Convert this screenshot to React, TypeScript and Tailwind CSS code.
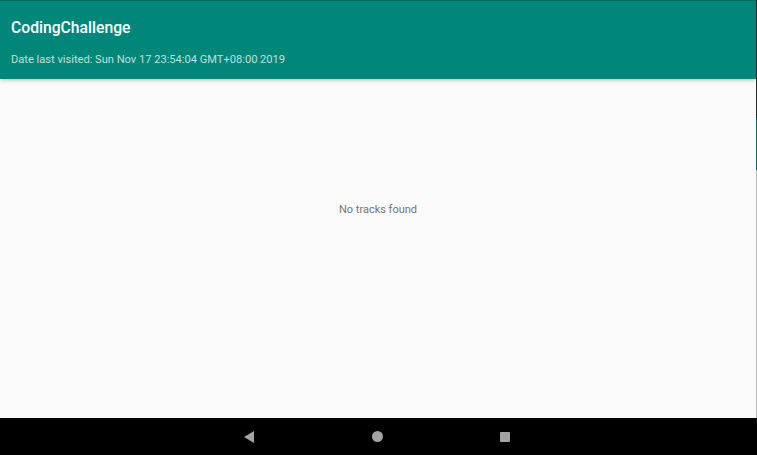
export default function App() {
  return (
    <div className="flex h-[455px] w-[757px] overflow-hidden bg-black font-['Roboto',sans-serif]">
      <div className="flex w-[756px] flex-col">
        {/* App bar */}
        <header className="relative z-10 flex h-[79px] flex-col border-t border-[#00695c] bg-[#00877a] px-[11px] shadow-[0_1px_4px_rgba(0,0,0,0.25)]">
          <h1 className="mt-[16px] text-[15.7px] font-medium leading-[22px] text-white">
            CodingChallenge
          </h1>
          <p className="mt-[14px] text-[11.1px] leading-[14px] text-white/75">
            Date last visited: Sun Nov 17 23:54:04 GMT+08:00 2019
          </p>
        </header>

        {/* Content */}
        <main className="flex h-[339px] flex-col items-center bg-[#fafafa] pt-[124px]">
          <p className="text-[11px] leading-[14px] text-[#757575]">No tracks found</p>
        </main>

        {/* Navigation bar */}
        <nav className="flex h-[37px] items-center justify-center gap-[117px] bg-black pr-[2px]">
          <svg width="11" height="12" viewBox="0 0 11 12">
            <path d="M0 6 L10 0 L10 12 Z" fill="#a3a3a3" />
          </svg>
          <div className="h-[11px] w-[11px] rounded-full bg-[#a3a3a3]" />
          <div className="h-[10px] w-[10px] rounded-[1px] bg-[#a3a3a3]" />
        </nav>
      </div>

      {/* Right edge artifact */}
      <div className="flex w-px flex-col">
        <div className="h-[118px] bg-[#2a2a2a]" />
        <div className="h-[52px] bg-[#00695c]" />
        <div className="h-[248px] bg-[#b8b8b8]" />
        <div className="flex-1 bg-black" />
      </div>
    </div>
  );
}
